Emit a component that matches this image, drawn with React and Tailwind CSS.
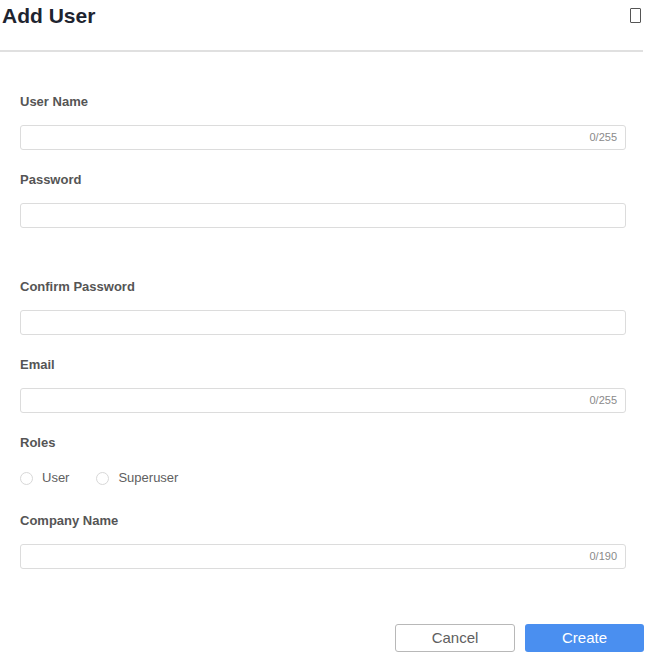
import React from "react";

function Field({ label, counter, className = "" }) {
  return (
    <div className={className}>
      <div className="h-4 leading-4 text-[13px] font-bold text-[#555]">{label}</div>
      <div className="mt-[15px] h-[25px] w-[606px] rounded-[3px] border border-[#dcdcdc] bg-white flex items-center justify-end pr-2">
        {counter && <span className="text-[11px] text-[#8a8a8a]">{counter}</span>}
      </div>
    </div>
  );
}

export default function App() {
  return (
    <div className="w-[649px] h-[664px] bg-white overflow-hidden" style={{ fontFamily: '"Liberation Sans", Arial, sans-serif' }}>
      <div className="w-[643px] h-[52px] border-b-2 border-[#e0e0e0] flex items-start justify-between">
        <div className="pl-[2px] pt-[3px] text-[21px] leading-[26px] font-bold text-[#1e2430]">Add User</div>
        <div className="mt-[8px] mr-[2px] w-[11px] h-[15px] border-[1.5px] border-[#555] rounded-[1px]" />
      </div>
      <div className="pl-5">
        <Field label="User Name" counter="0/255" className="mt-[42px]" />
        <Field label="Password" className="mt-[22px]" />
        <Field label="Confirm Password" className="mt-[51px]" />
        <Field label="Email" counter="0/255" className="mt-[22px]" />
        <div className="mt-[22px]">
          <div className="h-4 leading-4 text-[13px] font-bold text-[#555]">Roles</div>
          <div className="mt-[19px] flex items-center h-4 text-[13px] text-[#606060]">
            <span className="w-[13px] h-[13px] rounded-full border border-[#d8d8d8]" />
            <span className="ml-[9px]">User</span>
            <span className="ml-[27px] w-[13px] h-[13px] rounded-full border border-[#d8d8d8]" />
            <span className="ml-[9px]">Superuser</span>
          </div>
        </div>
        <Field label="Company Name" counter="0/190" className="mt-[27px]" />
      </div>
      <div className="mt-[55px] flex justify-end gap-[10px] pr-[5px]">
        <button className="w-[120px] h-[28px] rounded-[3px] border border-[#b8b8b8] bg-white text-[15px] text-[#606060]">Cancel</button>
        <button className="w-[119px] h-[28px] rounded-[3px] bg-[#4a8ff0] text-[15px] text-white">Create</button>
      </div>
    </div>
  );
}
